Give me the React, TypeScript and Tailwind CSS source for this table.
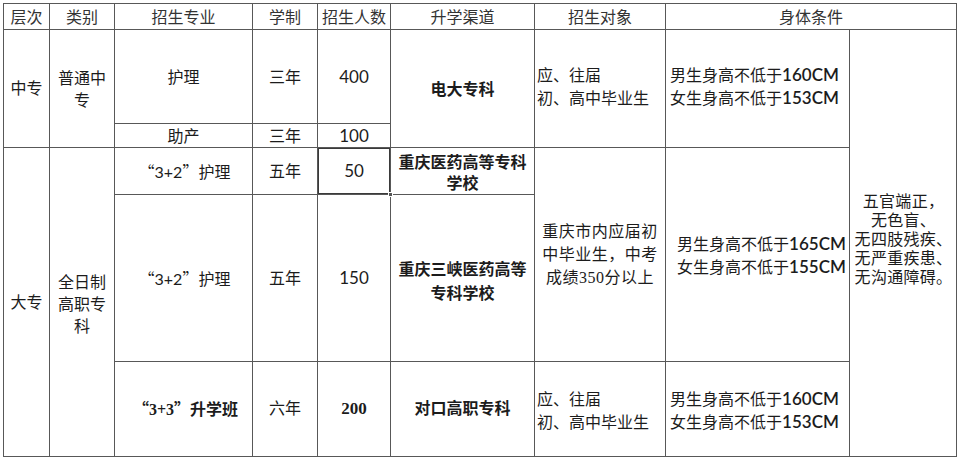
import React from "react";

const sans = "font-['Lato','Noto_Sans_CJK_SC',sans-serif]";
const serif = "font-['Liberation_Serif','Noto_Sans_CJK_SC',serif]";
const q = "font-['Noto_Sans_CJK_SC',sans-serif]";

function C({
  className = "",
  left = false,
  children,
}: {
  className?: string;
  left?: boolean;
  children?: React.ReactNode;
}) {
  return (
    <div
      className={`bg-white flex items-center ${left ? "justify-start text-left" : "justify-center text-center"} text-[16px] text-[#1c1c1c] ${sans} ${className}`}
    >
      <div className="whitespace-nowrap">{children}</div>
    </div>
  );
}

export default function App() {
  return (
    <div lang="zh-CN" className="w-[960px] h-[461px] bg-white pt-[3px] pl-[3px] overflow-hidden">
      <div className="grid w-max bg-[#585858] p-px gap-px grid-cols-[45px_64px_137px_64px_72px_143px_130px_183px_106px] grid-rows-[25px_93px_23px_46px_166px_94px]">
        {/* header */}
        <C className="col-start-1 row-start-1 text-[#333]">层次</C>
        <C className="col-start-2 row-start-1 text-[#333]">类别</C>
        <C className="col-start-3 row-start-1 text-[#333]">招生专业</C>
        <C className="col-start-4 row-start-1 text-[#333]">学制</C>
        <C className="col-start-5 row-start-1 text-[#333]">招生人数</C>
        <C className="col-start-6 row-start-1 text-[#333]">升学渠道</C>
        <C className="col-start-7 row-start-1 text-[#333]">招生对象</C>
        <C className="col-start-8 col-span-2 row-start-1 text-[#333]">身体条件</C>

        {/* 中专 */}
        <C className="col-start-1 row-start-2 row-span-2 pb-[1px]">中专</C>
        <C className="col-start-2 row-start-2 row-span-2 leading-[22px]">
          普通中
          <br />
          专
        </C>
        <C className="col-start-3 row-start-2">护理</C>
        <C className="col-start-4 row-start-2">三年</C>
        <C className="col-start-5 row-start-2 text-[17px]">400</C>
        <C className="col-start-3 row-start-3">助产</C>
        <C className="col-start-4 row-start-3">三年</C>
        <C className="col-start-5 row-start-3 text-[17px]">100</C>
        <C className="col-start-6 row-start-2 row-span-2 font-bold">电大专科</C>
        <C left className="col-start-7 row-start-2 row-span-2 pl-[2px] pb-[6px] leading-[23px]">
          应、往届
          <br />
          初、高中毕业生
        </C>
        <C className="col-start-8 row-start-2 row-span-2 pb-[6px] leading-[23px] pr-[6px]">
          男生身高不低于<span className="font-semibold text-[17px]">160CM</span>
          <br />
          女生身高不低于<span className="font-semibold text-[17px]">153CM</span>
        </C>
        <C className={`col-start-9 row-start-2 row-span-5 leading-[19px] text-[15.5px] pb-[8px] pl-[1px] tracking-[0.3px] ${serif}`}>
          五官端正，
          <br />
          无色盲、
          <br />
          无四肢残疾、
          <br />
          无严重疾患、
          <br />
          无沟通障碍。
        </C>

        {/* 大专 */}
        <C className="col-start-1 row-start-4 row-span-3">大专</C>
        <C className="col-start-2 row-start-4 row-span-3 leading-[22px] pt-[4px]">
          全日制
          <br />
          高职专
          <br />
          科
        </C>
        <C className="col-start-3 row-start-4 pl-[2px]">
          <span className={q}>“</span>3+2<span className={q}>”</span>护理
        </C>
        <C className="col-start-4 row-start-4">五年</C>
        <div className="col-start-5 row-start-4 relative bg-white flex items-center justify-center text-[17px] text-[#1c1c1c] font-['Lato',sans-serif] shadow-[inset_0_0_0_1px_#3a3a3a]">
          50
          <div className="absolute -right-[3px] -bottom-[3px] w-[5px] h-[5px] bg-[#555] border border-white" />
        </div>
        <C className="col-start-6 row-start-4 font-semibold leading-[21px] pt-[1px]">
          重庆医药高等专科
          <br />
          学校
        </C>
        <C className={`col-start-7 row-start-4 row-span-2 leading-[23px] text-[15.5px] tracking-[0.5px] ${serif}`}>
          重庆市内应届初
          <br />
          中毕业生，中考
          <br />
          成绩350分以上
        </C>
        <C className="col-start-8 row-start-4 row-span-2 leading-[23px] pl-[8px]">
          男生身高不低于<span className="font-semibold text-[17px]">165CM</span>
          <br />
          女生身高不低于<span className="font-semibold text-[17px]">155CM</span>
        </C>
        <C className="col-start-3 row-start-5 pl-[2px]">
          <span className={q}>“</span>3+2<span className={q}>”</span>护理
        </C>
        <C className="col-start-4 row-start-5">五年</C>
        <C className="col-start-5 row-start-5 text-[17px]">150</C>
        <C className="col-start-6 row-start-5 font-semibold leading-[24px] pt-[5px]">
          重庆三峡医药高等
          <br />
          专科学校
        </C>

        <C className={`col-start-3 row-start-6 font-bold pl-[4px] ${serif}`}>
          <span className={q}>“</span>3+3<span className={q}>”</span>升学班
        </C>
        <C className={`col-start-4 row-start-6 ${serif}`}>六年</C>
        <C className={`col-start-5 row-start-6 font-bold text-[17px] ${serif}`}>200</C>
        <C className={`col-start-6 row-start-6 font-bold ${serif}`}>对口高职专科</C>
        <C left className="col-start-7 row-start-6 pl-[2px] leading-[23px] pt-[1px]">
          应、往届
          <br />
          初、高中毕业生
        </C>
        <C className="col-start-8 row-start-6 leading-[23px] pr-[6px] pt-[1px]">
          男生身高不低于<span className="font-semibold text-[17px]">160CM</span>
          <br />
          女生身高不低于<span className="font-semibold text-[17px]">153CM</span>
        </C>
      </div>
    </div>
  );
}
